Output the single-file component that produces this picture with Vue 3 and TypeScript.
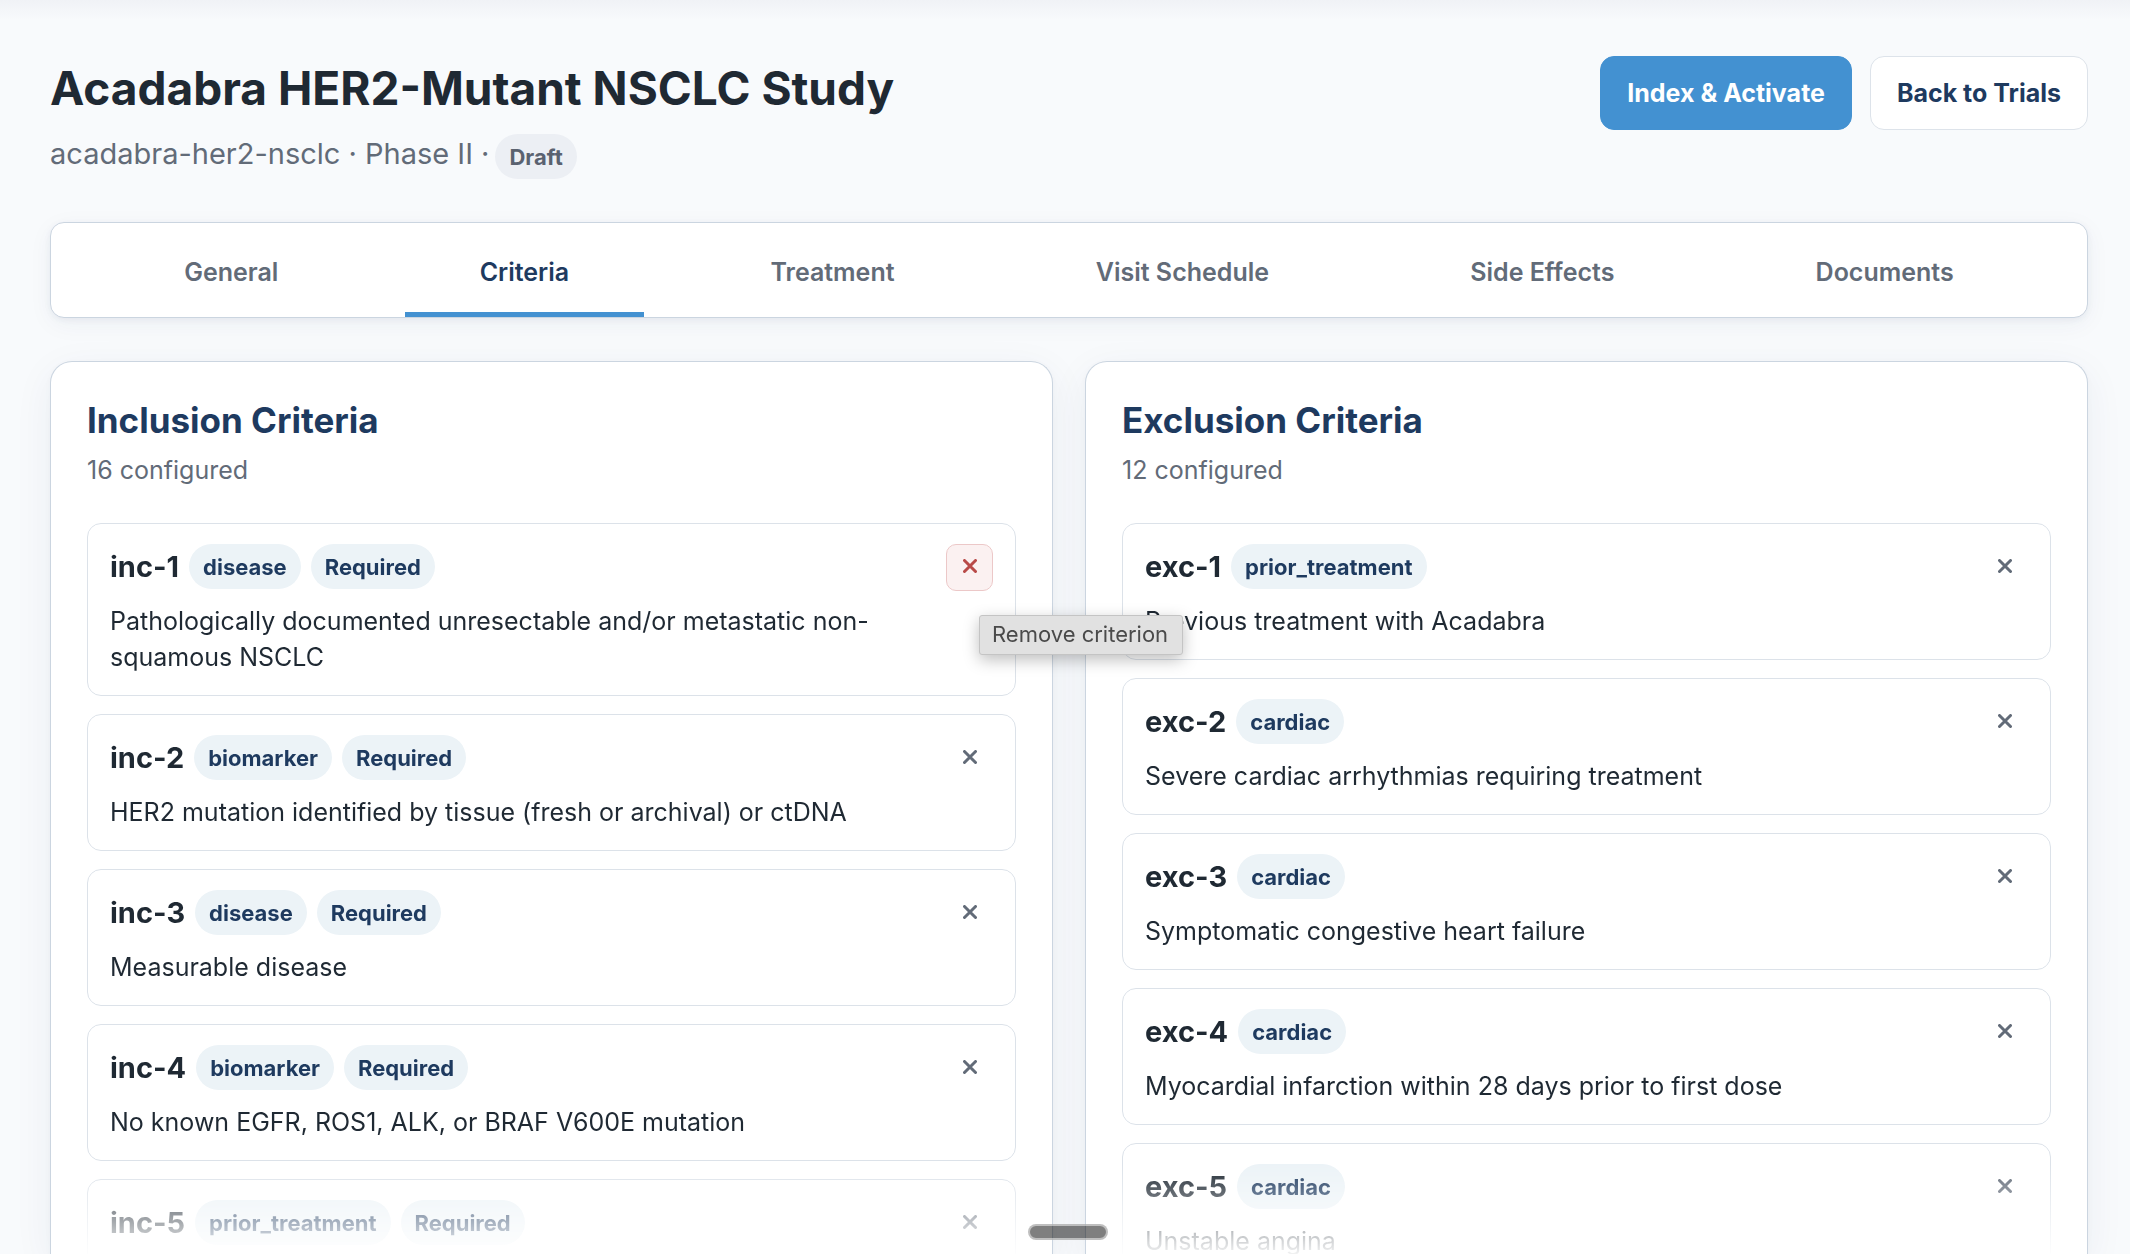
<script setup lang="ts">
import { ref } from 'vue'

interface Criterion {
  id: string
  tags: string[]
  text: string
}

interface Group {
  title: string
  count: number
  items: Criterion[]
}

const tabs: string[] = ['General', 'Criteria', 'Treatment', 'Visit Schedule', 'Side Effects', 'Documents']
const activeTab = ref<string>('Criteria')
const hoveredId = ref<string>('inc-1')

const groups: Group[] = [
  {
    title: 'Inclusion Criteria',
    count: 16,
    items: [
      { id: 'inc-1', tags: ['disease', 'Required'], text: 'Pathologically documented unresectable and/or metastatic non-squamous NSCLC' },
      { id: 'inc-2', tags: ['biomarker', 'Required'], text: 'HER2 mutation identified by tissue (fresh or archival) or ctDNA' },
      { id: 'inc-3', tags: ['disease', 'Required'], text: 'Measurable disease' },
      { id: 'inc-4', tags: ['biomarker', 'Required'], text: 'No known EGFR, ROS1, ALK, or BRAF V600E mutation' },
      { id: 'inc-5', tags: ['prior_treatment', 'Required'], text: '' },
    ],
  },
  {
    title: 'Exclusion Criteria',
    count: 12,
    items: [
      { id: 'exc-1', tags: ['prior_treatment'], text: 'Previous treatment with Acadabra' },
      { id: 'exc-2', tags: ['cardiac'], text: 'Severe cardiac arrhythmias requiring treatment' },
      { id: 'exc-3', tags: ['cardiac'], text: 'Symptomatic congestive heart failure' },
      { id: 'exc-4', tags: ['cardiac'], text: 'Myocardial infarction within 28 days prior to first dose' },
      { id: 'exc-5', tags: ['cardiac'], text: 'Unstable angina' },
    ],
  },
]
</script>

<template>
  <div class="page">
    <header class="header">
      <div>
        <h1>Acadabra HER2-Mutant NSCLC Study</h1>
        <p class="meta">
          <span class="slug">acadabra-her2-nsclc · Phase II ·</span>
          <span class="status">Draft</span>
        </p>
      </div>
      <div class="actions">
        <button type="button" class="btn primary">Index &amp; Activate</button>
        <button type="button" class="btn">Back to Trials</button>
      </div>
    </header>

    <nav class="tabs">
      <button
        v-for="tab in tabs"
        :key="tab"
        type="button"
        class="tab"
        :class="{ active: tab === activeTab }"
        @click="activeTab = tab"
      >{{ tab }}</button>
    </nav>

    <main class="columns">
      <section v-for="group in groups" :key="group.title" class="card">
        <h2>{{ group.title }}</h2>
        <p class="count">{{ group.count }} configured</p>
        <ul class="list">
          <li v-for="item in group.items" :key="item.id" class="item">
            <div class="body">
              <div class="row">
                <strong class="id">{{ item.id }}</strong>
                <span v-for="tag in item.tags" :key="tag" class="tag">{{ tag }}</span>
              </div>
              <p class="text">{{ item.text }}</p>
            </div>
            <div class="remove-wrap">
              <button
                type="button"
                class="remove"
                :class="{ hovered: item.id === hoveredId }"
                aria-label="Remove criterion"
                @mouseenter="hoveredId = item.id"
              >
                <svg viewBox="0 0 14 14" width="14" height="14" aria-hidden="true">
                  <path d="M1.5 1.5 12.5 12.5M12.5 1.5 1.5 12.5" />
                </svg>
              </button>
              <span v-if="item.id === hoveredId" class="tooltip" role="tooltip">Remove criterion</span>
            </div>
          </li>
        </ul>
      </section>
    </main>
    <div class="handle"></div>
  </div>
</template>

<style>
body {
  background: #f8fafc;
}
</style>

<style scoped>
.page {
  box-sizing: border-box;
  position: relative;
  display: flex;
  flex-direction: column;
  height: 100vh;
  overflow: hidden;
  padding: 56px 42px 0 50px;
  font-family: Inter, "Liberation Sans", sans-serif;
  font-size: 25px;
  line-height: 36px;
  color: #1f2933;
  background: linear-gradient(#f0f2f6, #f8fafc 20px);
}
h1, h2, p, ul {
  margin: 0;
  padding: 0;
}
button {
  font-family: inherit;
  cursor: pointer;
}
.header {
  display: flex;
  justify-content: space-between;
  align-items: flex-start;
  margin-bottom: 43px;
}
h1 {
  font-size: 46px;
  line-height: 65px;
  font-weight: 700;
}
.meta {
  display: flex;
  align-items: flex-start;
  gap: 6px;
  margin-top: 13px;
  height: 45px;
  color: #626b78;
}
.slug {
  font-size: 29px;
  line-height: 40px;
}
.status,
.tag {
  padding: 2px 14px 0;
  border-radius: 23px;
  font-size: 22px;
  line-height: 43px;
  font-weight: 650;
}
.status {
  color: #5a6270;
  background: #eceff4;
}
.tag {
  color: #1e3a5f;
  background: #ecf3f7;
}
.actions {
  display: flex;
  gap: 18px;
}
.btn {
  height: 74px;
  padding: 0 26px;
  border: 1px solid #dde3ea;
  border-radius: 14px;
  font-size: 25px;
  font-weight: 700;
  color: #1e3a5f;
  background: #fff;
}
.primary {
  border-color: #4391d1;
  color: #fff;
  background: #4391d1;
}
.tabs {
  display: flex;
  flex-shrink: 0;
  justify-content: space-evenly;
  height: 94px;
  padding: 0 7px;
  border: 1px solid #cbd5e0;
  border-radius: 14px;
  background: #fff;
  box-shadow: 0 2px 6px rgba(30, 50, 100, 0.06), 0 6px 24px rgba(30, 50, 100, 0.05);
}
.tab {
  padding: 8px 75px 0;
  border: 0;
  border-bottom: 5px solid transparent;
  font-size: 25px;
  font-weight: 600;
  color: #626b78;
  background: none;
}
.tab.active {
  border-bottom-color: #4391d1;
  color: #1e3a5f;
}
.columns {
  display: grid;
  grid-template-columns: 1fr 1fr;
  gap: 32px;
  flex: 1;
  min-height: 0;
  margin-top: 43px;
}
.card {
  display: flex;
  flex-direction: column;
  min-height: 0;
  padding: 36px 36px 0;
  border: 1px solid #cbd5e0;
  border-bottom: 0;
  border-radius: 22px 22px 0 0;
  background: #fff;
  box-shadow: 0 2px 6px rgba(30, 50, 100, 0.03), 0 10px 40px rgba(30, 50, 100, 0.06);
}
h2 {
  font-size: 35px;
  line-height: 45px;
  font-weight: 650;
  color: #1e3a5f;
}
.count {
  margin: 9px 0 35px;
  color: #626b78;
}
.list {
  display: flex;
  flex: 1;
  flex-direction: column;
  gap: 18px;
  min-height: 0;
  list-style: none;
  mask-image: linear-gradient(#000 calc(100% - 90px), transparent calc(100% + 6px));
  mask-clip: no-clip;
}
.item {
  display: flex;
  flex-shrink: 0;
  gap: 18px;
  padding: 20px 22px;
  border: 1px solid #dce2e9;
  border-radius: 14px;
}
.body {
  flex: 1;
  min-width: 0;
}
.row {
  display: flex;
  align-items: center;
  gap: 10px;
}
.id {
  font-size: 29px;
  font-weight: 700;
}
.text {
  margin-top: 14px;
  min-height: 36px;
}
.remove-wrap {
  position: relative;
}
.remove {
  display: flex;
  align-items: center;
  justify-content: center;
  width: 47px;
  height: 47px;
  padding: 0 0 4px;
  border: 1px solid transparent;
  border-radius: 10px;
  background: none;
  color: #626b78;
}
.remove.hovered {
  border-color: #ecc8c8;
  color: #b94a48;
  background: #fbf1f1;
}
.remove path {
  fill: none;
  stroke: currentColor;
  stroke-linecap: round;
  stroke-width: 3;
}
.tooltip {
  position: absolute;
  z-index: 5;
  top: 71px;
  left: 33px;
  padding: 0 14px 2px 12px;
  border: 1px solid #c4c4c4;
  border-radius: 3px;
  font-size: 22px;
  line-height: 36px;
  white-space: nowrap;
  color: #4a4a4a;
  background: #e1e1e1;
  box-shadow: 0 5px 16px rgba(0, 0, 0, 0.25);
}
.card:first-child {
  z-index: 1;
}
.handle {
  position: absolute;
  bottom: 14px;
  left: 50%;
  z-index: 6;
  box-sizing: border-box;
  width: 80px;
  height: 16px;
  margin-left: -37px;
  border: 2px solid rgba(255, 255, 255, 0.5);
  border-radius: 8px;
  background: rgba(0, 0, 0, 0.5);
}
</style>
